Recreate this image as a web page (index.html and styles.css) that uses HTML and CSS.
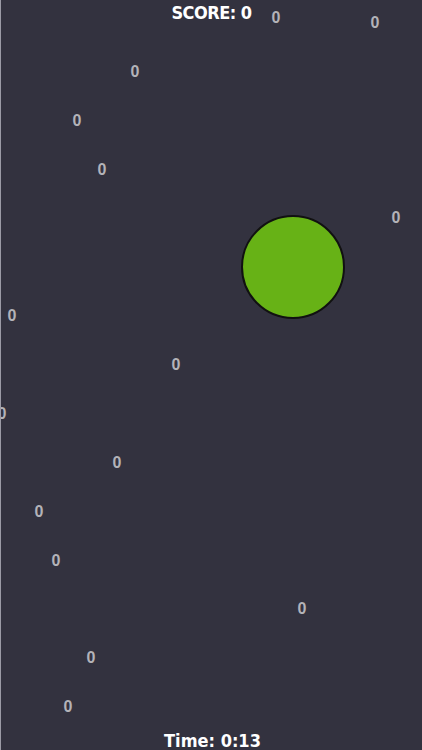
FILE: index.html
```html
<!DOCTYPE html>
<html>
<head>
<meta charset="utf-8">
<link rel="stylesheet" href="styles.css">
</head>
<body>
<div class="game">
  <div class="score">SCORE: 0</div>
  <div class="field">
    <span class="coin" style="left:276px;top:18px">0</span>
    <span class="coin" style="left:375px;top:23px">0</span>
    <span class="coin" style="left:135px;top:72px">0</span>
    <span class="coin" style="left:77px;top:121px">0</span>
    <span class="coin" style="left:102px;top:170px">0</span>
    <span class="coin" style="left:396px;top:218px">0</span>
    <span class="coin" style="left:12px;top:316px">0</span>
    <span class="coin" style="left:176px;top:365px">0</span>
    <span class="coin" style="left:2px;top:414px">0</span>
    <span class="coin" style="left:117px;top:463px">0</span>
    <span class="coin" style="left:39px;top:512px">0</span>
    <span class="coin" style="left:56px;top:561px">0</span>
    <span class="coin" style="left:302px;top:609px">0</span>
    <span class="coin" style="left:91px;top:658px">0</span>
    <span class="coin" style="left:68px;top:707px">0</span>
    <div class="ball" style="left:292px;top:266px"></div>
  </div>
  <div class="timer">Time: 0:13</div>
</div>
</body>
</html>
```
FILE: styles.css
```css
html, body {
  margin: 0;
  padding: 0;
  background: #33323f;
}
.game {
  position: relative;
  width: 422px;
  height: 750px;
  overflow: hidden;
  background: #33323f;
  border-left: 1px solid #9c9ba6;
  box-sizing: border-box;
  display: flex;
  flex-direction: column;
  justify-content: space-between;
  align-items: center;
}
.field {
  position: absolute;
  left: -1px;
  top: 0;
  width: 422px;
  height: 750px;
}
.score, .timer {
  position: relative;
  z-index: 2;
  color: #ffffff;
  font-family: "DejaVu Sans Condensed", "DejaVu Sans", sans-serif;
  font-weight: bold;
  font-size: 18px;
  line-height: 22px;
  letter-spacing: -0.5px;
}
.score {
  margin-top: 2px;
}
.timer {
  margin-bottom: -2px;
  margin-left: 2px;
  letter-spacing: 0;
}
.coin {
  position: absolute;
  transform: translate(-50%, -50%);
  color: #b3b3b8;
  font-family: "Liberation Sans", Arial, sans-serif;
  font-weight: bold;
  font-size: 16px;
  line-height: 16px;
}
.ball {
  position: absolute;
  width: 100px;
  height: 100px;
  margin-left: -51px;
  margin-top: -51px;
  border: 2px solid #111111;
  border-radius: 50%;
  background: #67b216;
}
```
